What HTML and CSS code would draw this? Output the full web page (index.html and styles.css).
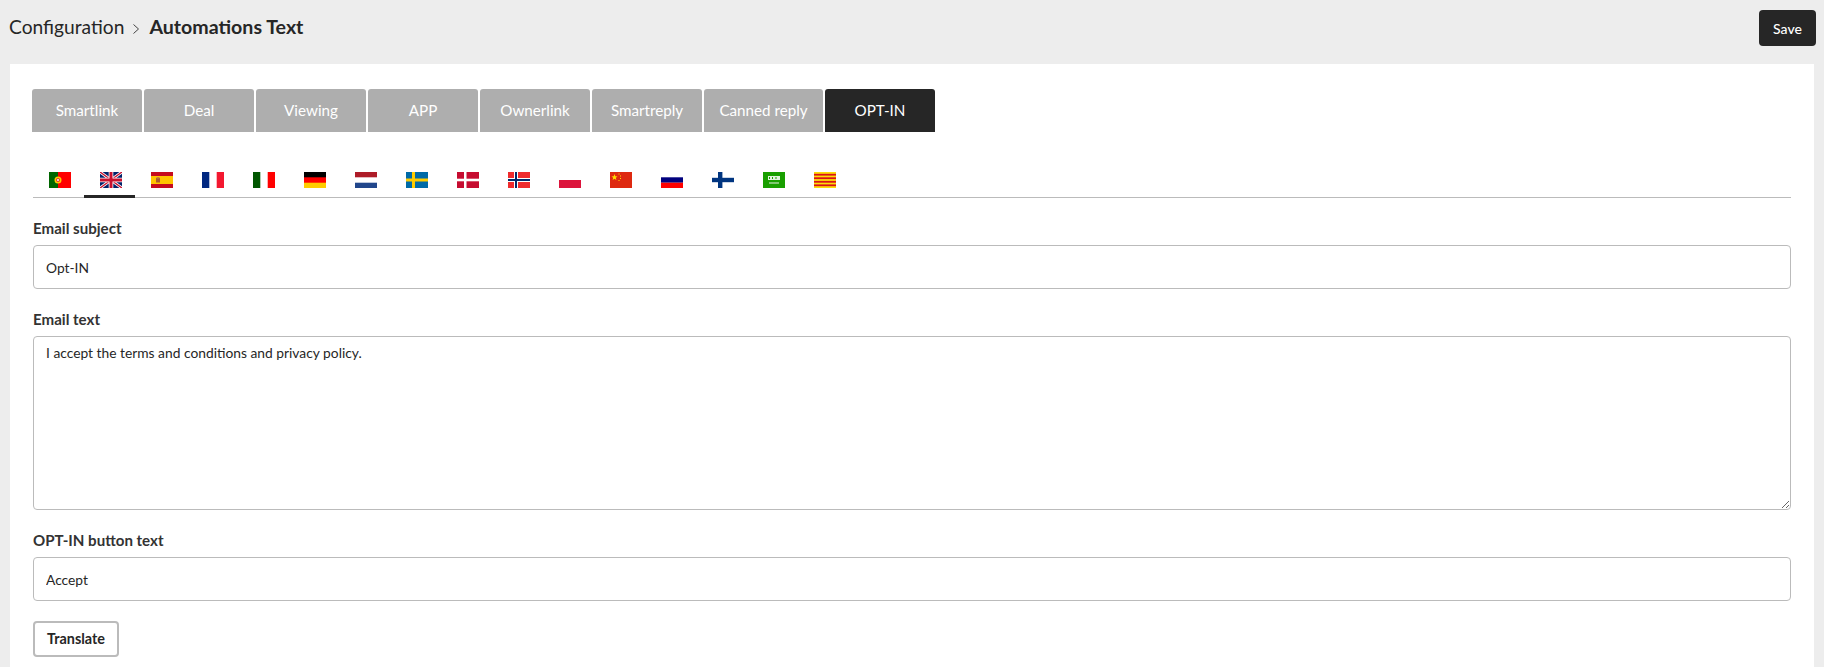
FILE: index.html
```html
<!DOCTYPE html>
<html lang="en">
<head>
<meta charset="utf-8">
<title>Automations Text</title>
<link rel="stylesheet" href="styles.css">
</head>
<body>
<header class="topbar">
  <div class="crumbs"><span class="crumb">Configuration</span><svg class="chev" viewBox="0 0 8 10"><path d="M1.5 .5 6.5 5 1.5 9.5" fill="none" stroke="#444" stroke-width="1"/></svg><strong class="crumb-current">Automations Text</strong></div>
  <button class="save">Save</button>
</header>
<main class="panel">
  <nav class="tabs">
    <a class="tab">Smartlink</a><a class="tab">Deal</a><a class="tab">Viewing</a><a class="tab">APP</a><a class="tab">Ownerlink</a><a class="tab">Smartreply</a><a class="tab tab-wide">Canned reply</a><a class="tab tab-active">OPT-IN</a>
  </nav>
  <div class="flags">
    <a class="flag"><svg viewBox="0 0 22 16"><rect width="22" height="16" fill="#f00"/><rect width="9" height="16" fill="#060"/><circle cx="9" cy="8" r="3.5" fill="#fc0"/><circle cx="9" cy="8" r="2" fill="#d33"/><circle cx="9" cy="8" r="1" fill="#fff"/></svg></a>
    <a class="flag flag-active"><svg viewBox="0 0 22 16"><rect width="22" height="16" fill="#012169"/><path d="M0 0 22 16M22 0 0 16" stroke="#fff" stroke-width="3"/><path d="M0 0 22 16M22 0 0 16" stroke="#c8102e" stroke-width="1.4"/><path d="M11 0V16M0 8H22" stroke="#fff" stroke-width="4.6"/><path d="M11 0V16M0 8H22" stroke="#c8102e" stroke-width="3"/></svg></a>
    <a class="flag"><svg viewBox="0 0 22 16"><rect width="22" height="16" fill="#c60b1e"/><rect y="4" width="22" height="8" fill="#ffc400"/><rect x="5" y="6" width="4" height="4.5" fill="#ad5b2c"/><rect x="5.5" y="5" width="3" height="1.5" fill="#c8813c"/></svg></a>
    <a class="flag"><svg viewBox="0 0 22 16"><rect width="22" height="16" fill="#fff"/><rect width="7.3" height="16" fill="#002780"/><rect x="14.7" width="7.3" height="16" fill="#f31830"/></svg></a>
    <a class="flag"><svg viewBox="0 0 22 16"><rect width="22" height="16" fill="#fff"/><rect width="7.3" height="16" fill="#005700"/><rect x="14.7" width="7.3" height="16" fill="#f00"/></svg></a>
    <a class="flag"><svg viewBox="0 0 22 16"><rect width="22" height="16" fill="#fc0"/><rect width="22" height="10.7" fill="#f00"/><rect width="22" height="5.3" fill="#000"/></svg></a>
    <a class="flag"><svg viewBox="0 0 22 16"><rect width="22" height="16" fill="#fff"/><rect width="22" height="5.3" fill="#ae1c28"/><rect y="10.7" width="22" height="5.3" fill="#21468b"/></svg></a>
    <a class="flag"><svg viewBox="0 0 22 16"><rect width="22" height="16" fill="#006aa7"/><rect x="6" width="3" height="16" fill="#fecc00"/><rect y="6.5" width="22" height="3" fill="#fecc00"/></svg></a>
    <a class="flag"><svg viewBox="0 0 22 16"><rect width="22" height="16" fill="#c60c30"/><rect x="7" width="2.5" height="16" fill="#fff"/><rect y="6.7" width="22" height="2.6" fill="#fff"/></svg></a>
    <a class="flag"><svg viewBox="0 0 22 16"><rect width="22" height="16" fill="#ef2b2d"/><rect x="6" width="4" height="16" fill="#fff"/><rect y="6" width="22" height="4" fill="#fff"/><rect x="7" width="2" height="16" fill="#002868"/><rect y="7" width="22" height="2" fill="#002868"/></svg></a>
    <a class="flag"><svg viewBox="0 0 22 16"><rect width="22" height="8" fill="#fff"/><rect y="8" width="22" height="8" fill="#dc143c"/></svg></a>
    <a class="flag"><svg viewBox="0 0 22 16"><rect width="22" height="16" fill="#de2910"/><path d="M4.5 2 5.3 4.2 7.5 4.4 5.8 5.8 6.4 8 4.5 6.8 2.6 8 3.2 5.8 1.5 4.4 3.7 4.2Z" fill="#ffde00"/><g fill="#ffde00"><rect x="8.5" y="1.5" width="1" height="1"/><rect x="10" y="3.5" width="1" height="1"/><rect x="10" y="6" width="1" height="1"/><rect x="8.5" y="8" width="1" height="1"/></g></svg></a>
    <a class="flag"><svg viewBox="0 0 22 16"><rect width="22" height="5.3" fill="#fff"/><rect y="5.3" width="22" height="5.4" fill="#01017e"/><rect y="10.7" width="22" height="5.3" fill="#f00"/></svg></a>
    <a class="flag"><svg viewBox="0 0 22 16"><rect width="22" height="16" fill="#fff"/><rect x="6" width="4.4" height="16" fill="#003580"/><rect y="5.8" width="22" height="4.4" fill="#003580"/></svg></a>
    <a class="flag"><svg viewBox="0 0 22 16"><rect width="22" height="16" fill="#199f00"/><rect x="5" y="4" width="12" height="4" fill="#e4f2e0"/><rect x="6" y="5" width="1" height="2" fill="#199f00"/><rect x="9" y="5" width="1" height="2" fill="#199f00"/><rect x="12.5" y="5" width="1" height="2" fill="#199f00"/><rect x="6" y="10.5" width="10" height="1" fill="#e4f2e0"/></svg></a>
    <a class="flag"><svg viewBox="0 0 22 16"><rect width="22" height="16" fill="#fcdd09"/><g fill="#da121a"><rect y="1.8" width="22" height="1.8"/><rect y="5.3" width="22" height="1.8"/><rect y="8.9" width="22" height="1.8"/><rect y="12.4" width="22" height="1.8"/></g></svg></a>
  </div>
  <div class="field">
    <label class="label" for="subject">Email subject</label>
    <input class="control" id="subject" value="Opt-IN">
  </div>
  <div class="field">
    <label class="label" for="text">Email text</label>
    <textarea class="control area" id="text">I accept the terms and conditions and privacy policy.</textarea>
  </div>
  <div class="field">
    <label class="label" for="btn">OPT-IN button text</label>
    <input class="control" id="btn" value="Accept">
  </div>
  <button class="translate">Translate</button>
</main>
</body>
</html>
```

FILE: styles.css
```css
* { box-sizing: border-box; }
html, body { height: 100%; }
body {
  margin: 0;
  background: #ededed;
  color: #262626;
  font-family: "Lato", sans-serif;
  font-size: 14px;
  overflow: hidden;
}
.topbar {
  height: 64px;
  display: flex;
  justify-content: space-between;
  align-items: flex-start;
  padding: 10px 8px 0 9px;
}
.crumbs {
  display: flex;
  align-items: center;
  height: 28px;
  padding-top: 5px;
  font-size: 19.2px;
}
.crumb { color: #262626; }
.chev { width: 8px; height: 10px; margin: 5px 9px 0 8px; }
.crumb-current { font-weight: 700; font-size: 19.6px; }
.save {
  width: 57px;
  height: 36px;
  background: #262626;
  color: #fff;
  border: 0;
  border-radius: 4px;
  font: 500 14px "Lato", sans-serif;
}
.panel {
  margin: 0 10px;
  background: #fff;
  height: 603px;
  padding: 25px 23px 0 22px;
}
.tabs { display: flex; gap: 2px; }
.tab {
  width: 110px;
  height: 43px;
  display: flex;
  align-items: center;
  justify-content: center;
  padding-bottom: 2px;
  background: #aeaeae;
  color: #fff;
  font-size: 15.2px;
  border-radius: 3px 3px 0 0;
}
.tab-wide { width: 119px; }
.tab-active { background: #262626; }
.flags {
  display: flex;
  margin: 27px 0 0 1px;
  border-bottom: 1px solid #bbb;
  height: 39px;
}
.flag {
  width: 51px;
  height: 39px;
  padding: 13px 0 0 16px;
}
.flag svg { display: block; width: 22px; height: 16px; }
.flag-active { box-shadow: inset 0 -3px 0 #262626; }
.field { margin: 0 0 0 1px; }
.label {
  display: block;
  font-weight: 700;
  font-size: 15.1px;
  line-height: 17px;
  padding-top: 22px;
  margin-bottom: 8px;
  color: #333;
}
.control {
  display: block;
  width: 100%;
  height: 44px;
  border: 1px solid #bbb;
  border-radius: 4px;
  padding: 1px 12px 0;
  font: 400 13.8px "Lato", sans-serif;
  color: #262626;
  background: #fff;
  outline: 0;
}
.area {
  height: 174px;
  padding: 8px 12px;
  line-height: 16px;
}
.translate {
  display: block;
  margin: 20px 0 0 1px;
  padding: 0 0 2px;
  width: 86px;
  height: 36px;
  background: #fff;
  border: 2px solid #bbb;
  border-radius: 4px;
  color: #262626;
  font: 700 14.4px "Lato", sans-serif;
}
```
